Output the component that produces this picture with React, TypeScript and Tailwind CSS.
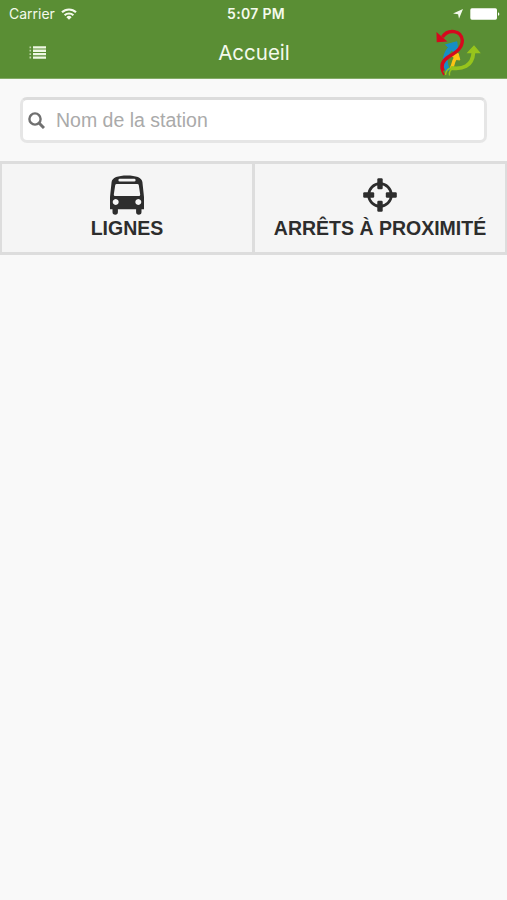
import React from 'react';

function WifiIcon() {
  return (
    <svg className="ml-[6px] w-4 h-3" viewBox="0 0 16 12" fill="none" stroke="#f4faec" strokeWidth="2.1">
      <path d="M1 4.3a10 10 0 0 1 14 0" />
      <path d="M3.6 7.3a6.3 6.3 0 0 1 8.8 0" />
      <path d="M8 11.8 5.4 9.2a3.6 3.6 0 0 1 5.2 0Z" fill="#f4faec" stroke="none" />
    </svg>
  );
}

function LocationIcon() {
  return (
    <svg className="w-[10px] h-[10px]" viewBox="0 0 10 10" fill="#f4faec">
      <path d="M10 0 6 9.8 5.1 5.3 0 4.6Z" />
    </svg>
  );
}

function BatteryIcon() {
  return (
    <svg className="w-[30px] h-3" viewBox="0 0 30 12" fill="#fff">
      <rect x="0.3" y="0.3" width="26.7" height="11.4" rx="1.6" />
      <path d="M28 4.2c1.8.5 1.8 3.1 0 3.6Z" />
    </svg>
  );
}

function ListIcon() {
  return (
    <svg className="w-[17px] h-[13px]" viewBox="0 0 17 13" fill="#eff8e4">
      <path d="M4 .2h13v2.3H4zM4 3.6h13v2.3H4zM4 7h13v2.3H4zM4 10.4h13v2.3H4z" />
      <path opacity=".65" d="M.5.4h1.6v1.8H.5zM.5 3.8h1.6v1.8H.5zM.5 7.2h1.6V9H.5zM.5 10.6h1.6v1.8H.5z" />
    </svg>
  );
}

function Logo() {
  return (
    <svg className="w-[50px] h-[52px]" viewBox="0 0 50 52" fill="none">
      <path d="M13 44C8.5 35 9.5 27 16.5 20" stroke="#168fc6" strokeWidth="4.8" />
      <path d="M10.5 17.8 21.8 14.8 22.8 24 19.5 25.5Z" fill="#168fc6" stroke="#168fc6" strokeWidth="1" />
      <path d="M16 41.5C18.5 39 17 36.5 20.5 31" stroke="#fdc414" strokeWidth="3.4" />
      <path d="M16.5 28.5 23.2 26.5 24.8 33 21.5 32.5Z" fill="#fdc414" stroke="#fdc414" strokeWidth="1" />
      <path d="M16 41C27 42.5 37.5 40 38.5 25" stroke="#97c41c" strokeWidth="3.8" />
      <path d="M33.2 25.5 39 19.3 44.3 25.5Z" fill="#97c41c" stroke="#97c41c" strokeWidth="1.4" />
      <path d="M10.5 48C11 43.5 13 41 17 41M14.5 48.5C14 45 15.5 42.5 18 41.5" stroke="#97c41c" strokeWidth="1.4" />
      <path d="M8 44C5.5 38 8.5 33 14 29.5C21.5 25 27.3 21 27.3 13.5C26.5 3 13 1.5 7.5 10" stroke="#d5091e" strokeWidth="3.4" />
      <path d="M6.5 41Q7 45 9 48" stroke="#d5091e" strokeWidth="1.8" />
      <path d="M2.2 6.5 2.4 14.5 10.6 14Z" fill="#d5091e" stroke="#d5091e" strokeWidth="1.4" />
    </svg>
  );
}

function SearchIcon() {
  return (
    <svg className="w-[17px] h-[17px] shrink-0" viewBox="0 0 17 17" fill="none" stroke="#707070">
      <circle cx="7" cy="7" r="5.6" strokeWidth="2.4" />
      <path d="m11 11 5 5" strokeWidth="3" />
    </svg>
  );
}

function BusIcon() {
  return (
    <svg className="w-[34px] h-[40px]" viewBox="0 0 34 40">
      <path
        fill="#2d2d2d"
        fillRule="evenodd"
        d="M0 34.3V22L1.6 7C2 2.5 8 .4 17 .4S32 2.5 32.4 7L34 22v12.3h-2.5V37a2.7 2.7 0 0 1-5.4 0v-2.7H7.9V37a2.7 2.7 0 0 1-5.4 0v-2.7ZM9.8 3.8a1.4 1.4 0 0 0 0 2.8h14.4a1.4 1.4 0 0 0 0-2.8ZM6.7 9Q5.4 9 5.2 10.3L3.8 19.5Q3.6 21 5.1 21h23.8q1.5 0 1.3-1.5l-1.4-9.2Q28.6 9 27.3 9ZM5.7 24a3 3 0 1 0 .01 0ZM28.3 24a3 3 0 1 0 .01 0Z"
      />
    </svg>
  );
}

function TargetIcon() {
  return (
    <svg className="w-[34px] h-[34px]" viewBox="0 0 34 34" fill="#2d2d2d">
      <circle cx="17" cy="17" r="11.3" fill="none" stroke="#2d2d2d" strokeWidth="2.7" />
      <rect x="14.3" y="0.2" width="5.4" height="11" rx="1.2" />
      <rect x="14.3" y="22.8" width="5.4" height="11" rx="1.2" />
      <rect x="0.2" y="14.3" width="11" height="5.4" rx="1.2" />
      <rect x="22.8" y="14.3" width="11" height="5.4" rx="1.2" />
    </svg>
  );
}

export default function App() {
  return (
    <div className="w-full min-h-screen bg-[#f9f9f9] font-['Liberation_Sans',sans-serif]">
      <header className="h-[79px] bg-[#5a8e34] border-b border-[#83aa66] font-['Inter',sans-serif] text-[#f4faec]">
        <div className="h-[27px] grid grid-cols-[1fr_auto_1fr] items-center pl-[9px] pr-[7px]">
          <div className="flex items-center">
            <span className="text-[14px] leading-[27px]">Carrier</span>
            <WifiIcon />
          </div>
          <span className="ml-[3px] text-[14px] font-semibold text-center leading-[27px] tracking-[0.3px]">5:07 PM</span>
          <div className="flex items-center justify-end gap-[7px]">
            <LocationIcon />
            <BatteryIcon />
          </div>
        </div>
        <div className="h-[51px] grid grid-cols-[1fr_auto_1fr] items-center pl-[29px] pr-[22px]">
          <button aria-label="Menu" className="justify-self-start -mt-px">
            <ListIcon />
          </button>
          <h1 className="text-[20.5px] text-center -ml-[6px]">Accueil</h1>
          <div className="justify-self-end">
            <Logo />
          </div>
        </div>
      </header>

      <main>
        <div className="px-5 pt-[18px] pb-[18px]">
          <label className="h-[46px] flex items-center gap-[11px] pl-[5px] bg-white border-[3px] border-[#e6e6e6] border-t-[#dcdcdc] rounded-[7px]">
            <SearchIcon />
            <input
              type="text"
              placeholder="Nom de la station"
              className="flex-1 min-w-0 pt-0.5 bg-transparent outline-none text-[19.5px] placeholder:text-[#aaaaaa]"
            />
          </label>
        </div>

        <div className="flex h-[94px] border-y-[3px] border-r-2 border-l-2 border-[#dddddd] bg-[#f5f5f5] text-[#2d2d2d]">
          <button className="w-[253px] shrink-0 flex flex-col items-center pt-[11px] border-r-[3px] border-[#dddddd]">
            <BusIcon />
            <span className="mt-px text-[19.5px] leading-6 font-bold">LIGNES</span>
          </button>
          <button className="flex-1 flex flex-col items-center pt-[14px]">
            <TargetIcon />
            <span className="mt-1 text-[19.5px] leading-6 font-bold whitespace-nowrap">ARRÊTS À PROXIMITÉ</span>
          </button>
        </div>
      </main>
    </div>
  );
}
